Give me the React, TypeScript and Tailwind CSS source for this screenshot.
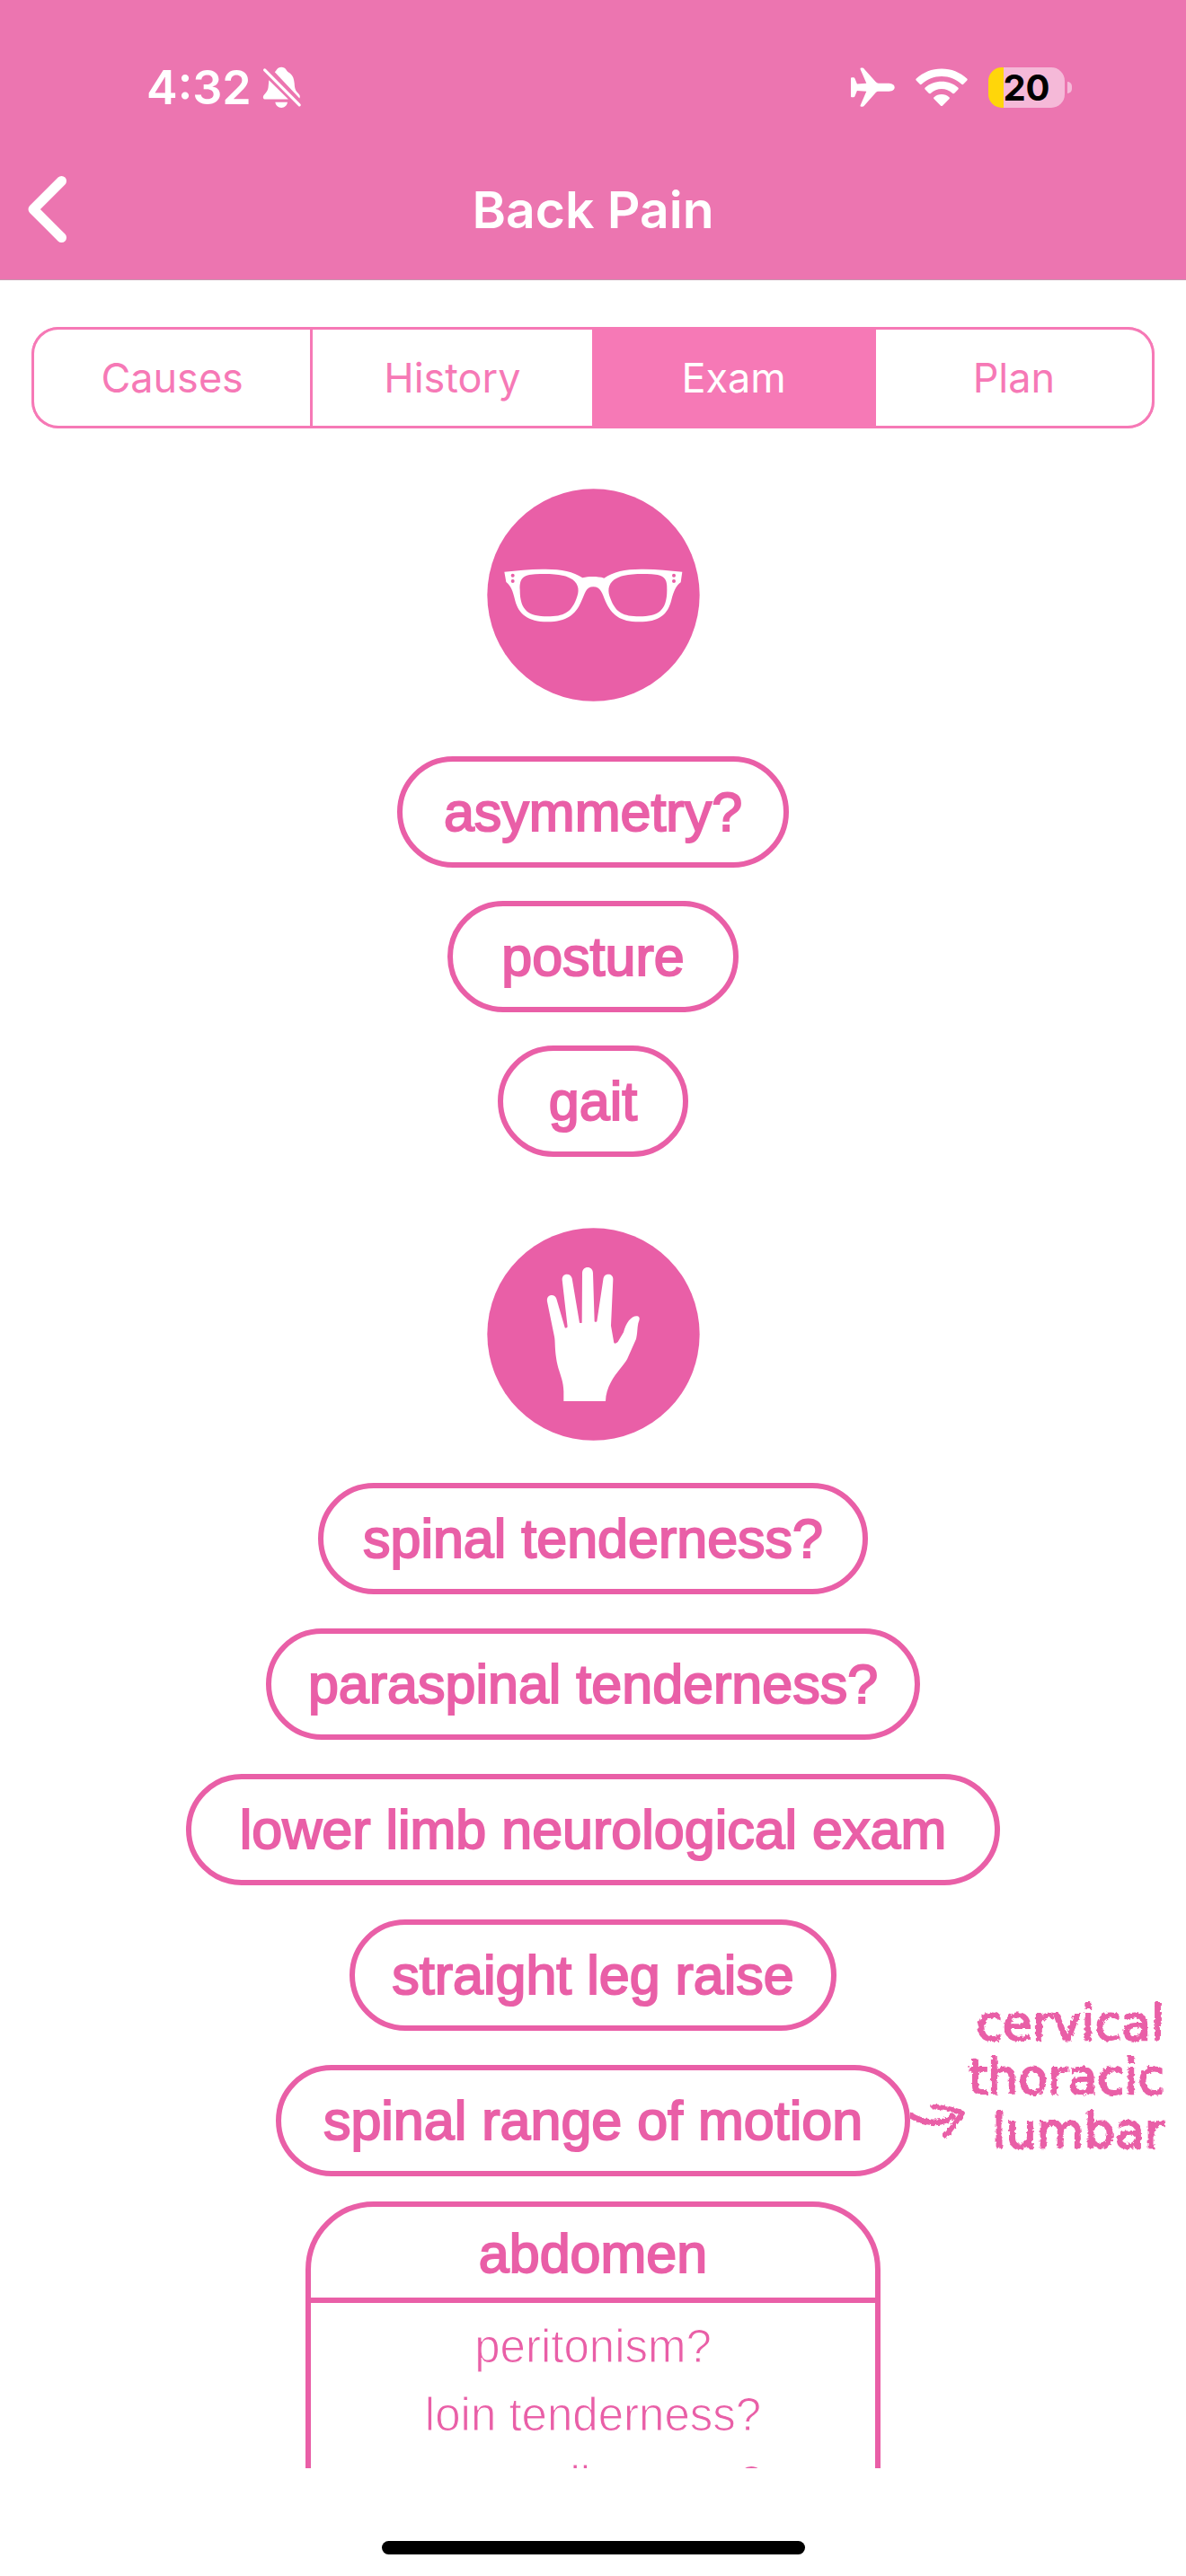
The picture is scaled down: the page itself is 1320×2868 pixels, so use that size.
import React, { useState } from "react";

const tabs = ["Causes", "History", "Exam", "Plan"];

function BellOff() {
  return (
    <svg viewBox="0 0 44 47" className="h-[47px] w-[44px]" fill="white" aria-label="Silent mode">
      <path d="M13.8 6.2C16 4.6 16.2 .7 21.2 .7S26.500 4.600 28.700 6.200C34.500 9.500 35.200 14 35.700 19C36 24.500 36.800 26.800 39.500 29.500C41.600 31.600 42.400 33 41.400 35.400Z" />
      <path d="M7.300 15.200L28.900 36.600H3.600C.4 36.600 .2 33.400 2 31.400C5 28 6.300 26.500 6.600 23Z" />
      <path d="M14.300 39.800H28C27.200 43.800 24.600 45.900 21.200 45.900S15.100 43.800 14.300 39.800Z" />
      <path d="M2.600 3.900L41.200 42.900" stroke="white" strokeWidth="3.200" strokeLinecap="round" />
    </svg>
  );
}

function Airplane() {
  return (
    <svg viewBox="0 0 49 45" className="h-[45px] w-[49px]" fill="white" aria-label="Airplane mode">
      <path d="M10.500 2Q10.300 .6 11.700 .6H12.700Q14.200 .6 15 1.900L27.800 16.300Q29 17.700 30.700 17.700H42.500C46.400 17.900 48.700 19.900 48.700 22.200S46.400 26.600 42.500 26.700H30.700Q29 26.700 27.800 28.100L15 42.500Q14.200 43.800 12.700 43.800H11.700Q10.300 43.800 10.500 42.400L17.300 26.700L6.900 26L4.400 32.200Q4 33.200 3 33.200H1Q0 33.200 0 32.200V12.200Q0 11.200 1 11.200H3Q4 11.200 4.400 12.200L6.900 18.400L17.300 17.700Z" />
    </svg>
  );
}

function Wifi() {
  return (
    <svg viewBox="0 0 58 43" className="h-[43px] w-[58px]" fill="white" aria-label="Wi-Fi">
      <path d="M.7 13.500Q-.2 12.500 .8 11.600C8.500 4.200 18.200 .4 29 .4S49.500 4.200 57.200 11.600Q58.200 12.500 57.300 13.500L53.200 17.800Q52.300 18.700 51.300 17.800C45 12.100 37.500 9 29 9S13 12.100 6.700 17.800Q5.700 18.700 4.800 17.800Z" />
      <path d="M10.600 23.500Q9.700 22.500 10.700 21.600C15.800 17.100 22 14.800 29 14.800S42.200 17.100 47.300 21.600Q48.300 22.500 47.400 23.500L43.300 27.800Q42.400 28.700 41.300 27.900C37.500 24.700 33.500 23 29 23S20.500 24.700 16.700 27.900Q15.600 28.700 14.700 27.800Z" />
      <path d="M20.400 34Q19.500 33 20.600 32.200C23 30.200 25.700 29 29 29S35 30.200 37.400 32.200Q38.500 33 37.600 34L30.200 41.500Q29 42.600 27.800 41.500Z" />
    </svg>
  );
}

function Battery() {
  return (
    <div className="flex items-center gap-[3px]" role="img" aria-label="Battery 20 percent">
      <div className="flex h-[45px] w-[85px] items-center justify-center rounded-[15px] bg-[linear-gradient(to_right,#ffd60a_17px,#f5b9d8_17px)]">
        <span className="font-[Inter] text-[40px] leading-none font-bold text-black">20</span>
      </div>
      <div className="h-[13px] w-[5px] rounded-r-full bg-[#f5b9d8]" />
    </div>
  );
}

function Glasses() {
  return (
    <svg viewBox="65 71 709 711" className="size-[237px]" role="img" aria-label="Look">
      <circle cx="419.500" cy="426.500" r="354.500" fill="#e95fa7" />
      <path
        fill="white"
        fillRule="evenodd"
        d="M122 349C165 345 205 340 250 340C310 339 350 347 383 369C405 364 433 364 455 370C488 347 528 339 588 340C633 340 673 345 716 349L711 384C695 396 688 412 680 442C668 492 638 516 572 516C508 516 480 492 460 448C448 420 444 399 419 399C394 399 392 420 378 450C360 492 330 516 266 516C200 515 170 490 158 445C150 412 145 398 128 383ZM174 410C172 370 185 360 225 357C300 354 330 362 350 375C372 392 373 415 362 440C345 485 320 498 266 498C205 498 174 480 174 410ZM665 410C667 370 654 360 614 357C539 354 509 362 489 375C467 392 466 415 477 440C494 485 519 498 573 498C634 498 665 480 665 410Z"
      />
      <g fill="#e95fa7">
        <circle cx="150" cy="361" r="6" />
        <circle cx="150" cy="380" r="6" />
        <circle cx="688" cy="361" r="6" />
        <circle cx="688" cy="380" r="6" />
      </g>
    </svg>
  );
}

function Hand() {
  return (
    <svg viewBox="65 51 709 711" className="size-[237px]" role="img" aria-label="Feel">
      <circle cx="419.500" cy="406.500" r="354.500" fill="#e95fa7" />
      <path
        fill="white"
        d="M320 630V598C319 552 302 535 295 485C290 450 292 430 289 415L265 297C263 284 270 276 280 276C288 276 293 280 296 288L324 384Q328 388 333 382L315 224C315 212 322 206 331 206C340 206 346 211 348 220L373 368Q377 370 381 368L382 203C382 190 390 183 400 183C410 183 418 190 418 203L423 364Q427 367 431 364L452 224C453 212 460 206 469 206C479 206 486 213 485 224L478 378L488 435Q492 440 501 432L520 400C528 368 546 345 565 346C575 348 575 354 569 370C565 390 567 402 562 422L532 490C520 515 462 560 460 630Z"
      />
    </svg>
  );
}

function Arrow() {
  return (
    <svg viewBox="0 0 186 126" className="h-[42px] w-[62px] shrink-0 [filter:url(#chalk)]" fill="none" stroke="#e95fa7" strokeLinecap="round" strokeLinejoin="round" aria-hidden="true">
      <path d="M2 46C30 64 95 84 142 50" strokeWidth="20" />
      <path d="M78 16C105 20 145 22 174 38C155 62 142 88 118 114" strokeWidth="17" />
    </svg>
  );
}

function Pill({ label, width }: { label: string; width: string }) {
  return (
    <div
      className={`flex h-[124px] items-center justify-center rounded-full border-[6px] border-[#e95fa7] whitespace-nowrap ${width}`}
    >
      <span className="text-[61px] leading-none [-webkit-text-stroke:2px_#e95fa7]">{label}</span>
    </div>
  );
}

export default function App() {
  const [active, setActive] = useState("Exam");

  return (
    <div className="flex h-screen flex-col bg-white font-['Liberation_Sans',Arial,sans-serif] text-[#e95fa7]">
      <svg className="absolute size-0" aria-hidden="true">
        <filter id="chalk">
          <feTurbulence type="fractalNoise" baseFrequency="0.25" numOctaves="2" seed="4" />
          <feDisplacementMap in="SourceGraphic" scale="5" />
        </filter>
      </svg>

      <header className="shrink-0 border-b border-[#c79ab1] bg-[#ec75b0] pb-10 text-white">
        <div className="flex h-[195px] items-center justify-between pr-[127px] pl-[163px]">
          <div className="flex items-center gap-3">
            <span className="font-[Inter] text-[52px] leading-none font-semibold">4:32</span>
            <BellOff />
          </div>
          <div className="flex items-center gap-[23px]">
            <Airplane />
            <Wifi />
            <Battery />
          </div>
        </div>
        <div className="grid h-[76px] grid-cols-[1fr_auto_1fr] items-center px-[31px]">
          <button type="button" aria-label="Back" className="justify-self-start">
            <svg viewBox="0 0 43 74" className="h-[74px] w-[43px]" fill="none" stroke="white" strokeWidth="11" strokeLinecap="round" strokeLinejoin="round">
              <path d="M37.500 5.500L6 37L37.500 68.500" />
            </svg>
          </button>
          <h1 className="font-[Inter] text-[57px] leading-none font-semibold">Back Pain</h1>
        </div>
      </header>

      <main className="flex min-h-0 flex-1 flex-col items-center overflow-y-auto pt-[52px] [scrollbar-width:none]">
        <div className="w-full shrink-0 px-[35px]">
          <nav className="grid h-[113px] grid-cols-4 gap-[3px] overflow-hidden rounded-[30px] bg-[#f679b6]">
            {tabs.map((tab) => (
              <button
                key={tab}
                type="button"
                aria-pressed={tab === active}
                onClick={() => setActive(tab)}
                className={`border-y-[3px] border-[#f679b6] font-[Inter] text-[45px] leading-none first:rounded-l-[30px] first:border-l-[3px] last:rounded-r-[30px] last:border-r-[3px] ${
                  tab === active ? "bg-[#f679b6] text-white" : "bg-white text-[#f679b6]"
                }`}
              >
                {tab}
              </button>
            ))}
          </nav>
        </div>

        <section className="flex w-full shrink-0 flex-col items-center pt-[67px]">
          <Glasses />
          <div className="mt-[61px] flex flex-col items-center gap-[37px]">
            <Pill label="asymmetry?" width="min-w-[436px]" />
            <Pill label="posture" width="min-w-[324px]" />
            <Pill label="gait" width="min-w-[212px]" />
          </div>
        </section>

        <section className="flex w-full shrink-0 flex-col items-center pt-[79px]">
          <Hand />
          <div className="mt-[47px] flex w-full flex-col items-center gap-[38px]">
            <Pill label="spinal tenderness?" width="min-w-[612px]" />
            <Pill label="paraspinal tenderness?" width="min-w-[728px]" />
            <Pill label="lower limb neurological exam" width="min-w-[906px]" />
            <Pill label="straight leg raise" width="min-w-[542px]" />
            <div className="grid w-full grid-cols-[1fr_auto_1fr]">
              <div className="col-start-2">
                <Pill label="spinal range of motion" width="min-w-[706px]" />
              </div>
              <div className="flex h-[124px] items-end justify-between pr-6">
                <div className="self-center">
                  <Arrow />
                </div>
                <p className="mb-5 text-right font-['DejaVu_Sans',sans-serif] text-[54px] leading-[60px] [filter:url(#chalk)] [-webkit-text-stroke:2px_#e95fa7]">
                  cervical
                  <br />
                  thoracic
                  <br />
                  lumbar
                </p>
              </div>
            </div>
          </div>
        </section>

        <section className="mt-7 w-[640px] max-w-full shrink-0 rounded-t-[76px] border-[6px] border-[#e95fa7]">
          <h2 className="flex h-[107px] items-center justify-center border-b-[6px] border-[#e95fa7] pt-1 text-[61px] leading-none [-webkit-text-stroke:2px_#e95fa7]">
            abdomen
          </h2>
          <ul className="py-[11px] text-center text-[51px] leading-[76px] [-webkit-text-stroke:1px_white]">
            <li>peritonism?</li>
            <li>loin tenderness?</li>
            <li>expansile mass?</li>
          </ul>
        </section>
      </main>

      <footer className="flex h-[120px] shrink-0 items-end justify-center pb-6">
        <div className="h-[15px] w-[471px] rounded-full bg-black" />
      </footer>
    </div>
  );
}
